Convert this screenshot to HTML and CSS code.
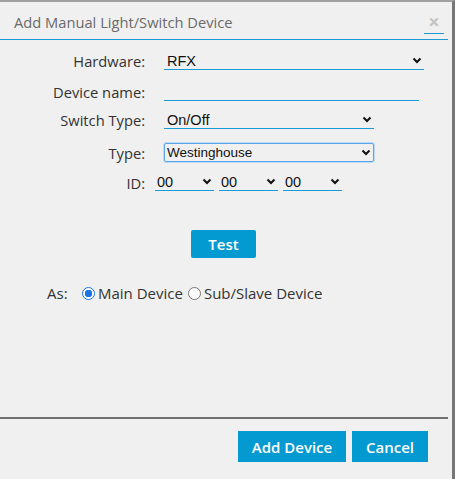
FILE: index.html
```html
<!DOCTYPE html>
<html>
<head>
<meta charset="utf-8">
<link rel="stylesheet" href="styles.css">
</head>
<body>
<div class="dialog">
  <div class="titlebar">
    <span class="title">Add Manual Light/Switch Device</span>
    <span class="close">&#215;</span>
  </div>
  <div class="content">
    <div class="form">
      <div class="row r-hw">
        <label class="lbl">Hardware:</label>
        <div class="sel w-hw"><span>RFX</span><svg class="chev" width="10" height="7" viewBox="0 0 10 7"><path d="M1.5 1.5 L5 5 L8.5 1.5" fill="none" stroke="#111" stroke-width="2"/></svg></div>
      </div>
      <div class="row r-name">
        <label class="lbl">Device name:</label>
        <div class="inp w-name"></div>
      </div>
      <div class="row r-sw">
        <label class="lbl">Switch Type:</label>
        <div class="sel w-sw"><span>On/Off</span><svg class="chev" width="10" height="7" viewBox="0 0 10 7"><path d="M1.5 1.5 L5 5 L8.5 1.5" fill="none" stroke="#111" stroke-width="2"/></svg></div>
      </div>
      <div class="row r-type">
        <label class="lbl">Type:</label>
        <div class="sel boxed w-sw"><span>Westinghouse</span><svg class="chev" width="10" height="7" viewBox="0 0 10 7"><path d="M1.5 1.5 L5 5 L8.5 1.5" fill="none" stroke="#111" stroke-width="2"/></svg></div>
      </div>
      <div class="row r-id">
        <label class="lbl lbl-id">ID:</label>
        <div class="ids">
          <div class="sel small"><span>00</span><svg class="chev" width="10" height="7" viewBox="0 0 10 7"><path d="M1.5 1.5 L5 5 L8.5 1.5" fill="none" stroke="#111" stroke-width="2"/></svg></div>
          <div class="sel small"><span>00</span><svg class="chev" width="10" height="7" viewBox="0 0 10 7"><path d="M1.5 1.5 L5 5 L8.5 1.5" fill="none" stroke="#111" stroke-width="2"/></svg></div>
          <div class="sel small"><span>00</span><svg class="chev" width="10" height="7" viewBox="0 0 10 7"><path d="M1.5 1.5 L5 5 L8.5 1.5" fill="none" stroke="#111" stroke-width="2"/></svg></div>
        </div>
      </div>
    </div>
    <div class="test-wrap"><button class="btn test">Test</button></div>
    <div class="as-row">
      <span class="as-lbl">As:</span>
      <span class="radio checked"></span><span class="rtext">Main Device</span>
      <span class="radio"></span><span class="rtext">Sub/Slave Device</span>
    </div>
  </div>
  <div class="footer">
    <button class="btn add">Add Device</button>
    <button class="btn cancel">Cancel</button>
  </div>
</div>
</body>
</html>
```

FILE: styles.css
```css
html, body {
  margin: 0;
  padding: 0;
  background: #f0f0f0;
  height: 479px;
  overflow: hidden;
}
.dialog {
  box-sizing: border-box;
  width: 455px;
  height: 479px;
  background: #f0f0f0;
  border-top: 2px solid #a0a0a0;
  border-right: 3px solid #777;
  display: flex;
  flex-direction: column;
  font-family: "Open Sans", sans-serif;
}
.titlebar {
  height: 38px;
  margin-right: 4px;
  border-bottom: 1px solid #1a9ad6;
  display: flex;
  align-items: center;
  padding-left: 14px;
  padding-right: 4px;
  box-sizing: border-box;
}
.title {
  flex: 1;
  color: #6a6a6a;
  font-size: 14.7px;
  padding-top: 3px;
}
.close {
  width: 20px;
  text-align: center;
  color: #c4c4c4;
  font-weight: bold;
  font-size: 20px;
  line-height: 16px;
  border-bottom: 1px solid #1a9ad6;
  padding-bottom: 3px;
  margin-top: 6px;
}
.content {
  flex: 1;
}
.form {
  padding-top: 12px;
  display: flex;
  flex-direction: column;
}
.row {
  display: grid;
  grid-template-columns: 145px auto;
  column-gap: 19px;
  align-items: end;
}
.r-hw { height: 18px; }
.r-name { height: 18px; margin-top: 13px; }
.r-sw { height: 18px; margin-top: 10px; }
.r-type { height: 19px; margin-top: 14px; align-items: center; }
.r-id { height: 18px; margin-top: 11px; grid-template-columns: 145px auto; column-gap: 10px; }
.r-id .lbl { line-height: 16px; }
.lbl {
  text-align: right;
  color: #333;
  font-size: 14.7px;
  line-height: 18px;
}
.sel, .inp {
  box-sizing: border-box;
  height: 18px;
  border-bottom: 1px solid #1a9ad6;
  display: flex;
  align-items: center;
  justify-content: space-between;
  font-family: "Liberation Sans", Arial, sans-serif;
  font-size: 14.5px;
  color: #111;
  padding-left: 3px;
  padding-right: 2px;
}
.sel span { line-height: 16px; }
.w-hw { width: 260px; }
.w-name { width: 255px; }
.w-sw { width: 210px; }
.boxed {
  height: 19px;
  border: 1px solid #5aa4e8;
  border-radius: 2px;
  box-shadow: 0 0 0 1px #bcdaf7;
  font-size: 13.5px;
  padding-left: 2px;
}
.ids {
  display: flex;
  gap: 5px;
}
.small {
  width: 59px;
  padding-left: 2px;
}
.small span { line-height: 14px; }
.test-wrap {
  padding-left: 191px;
  margin-top: 39px;
}
.btn {
  border: none;
  background: #0399d1;
  color: #fff;
  font-family: "Open Sans", sans-serif;
  font-weight: 600;
  font-size: 15px;
  padding: 0;
  cursor: pointer;
}
.test {
  width: 65px;
  height: 28px;
  border-radius: 2px;
}
.as-row {
  margin-top: 25px;
  padding-left: 47px;
  display: flex;
  align-items: center;
  font-size: 15px;
  color: #333;
  height: 20px;
}
.as-lbl { width: 35px; }
.radio {
  box-sizing: border-box;
  width: 13px;
  height: 13px;
  border-radius: 50%;
  border: 1px solid #767676;
  background: #fff;
  margin-right: 3px;
  margin-left: 0;
}
.radio.checked {
  border: 1px solid #1a73e8;
  background: radial-gradient(circle, #1a73e8 0 3.5px, #fff 4px);
}
.rtext { margin-right: 5px; }
.footer {
  height: 62px;
  margin-right: 4px;
  border-top: 2px solid #707070;
  display: flex;
  justify-content: flex-end;
  align-items: flex-start;
  gap: 6px;
  padding-top: 12px;
  padding-right: 20px;
  box-sizing: border-box;
}
.add { width: 108px; height: 31px; }
.cancel { width: 76px; height: 31px; }
```
